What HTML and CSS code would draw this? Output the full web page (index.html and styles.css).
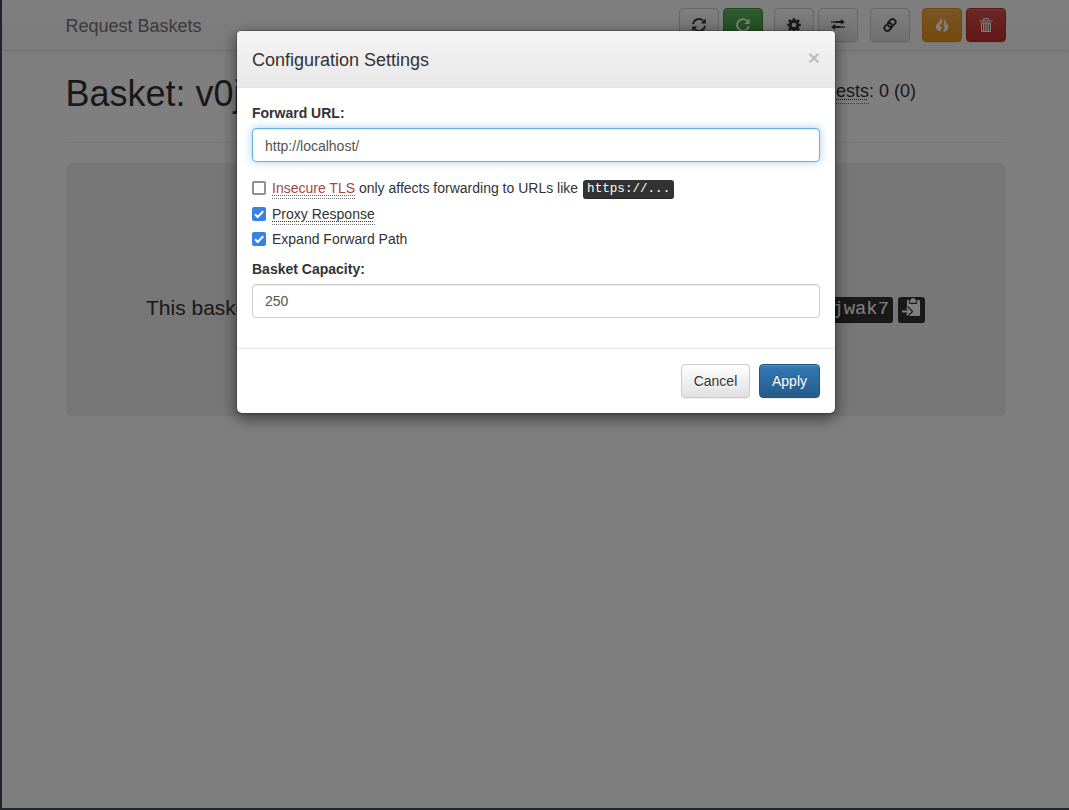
FILE: index.html
```html
<!DOCTYPE html>
<html lang="en">
<head>
<meta charset="utf-8">
<title>Request Baskets</title>
<link rel="stylesheet" href="styles.css">
</head>
<body>
<div class="page">
  <nav class="navbar">
    <div class="container navbar-inner">
      <a class="brand">Request Baskets</a>
      <div class="toolbar">
        <div class="btn-group">
          <button class="btn btn-default btn-icon" aria-label="Refresh"><svg class="icon" viewBox="0 0 14 14"><g fill="none" stroke="currentColor" stroke-width="1.7"><path d="M1 6.2A6 6 0 0 1 11.2 2.8"/><path d="M13 7.8A6 6 0 0 1 2.8 11.2"/></g><path d="M13.8 0.4V5.4H8.8ZM.2 13.6V8.6H5.2Z" fill="currentColor"/></svg></button>
          <button class="btn btn-success btn-icon" aria-label="Auto refresh"><svg class="icon" viewBox="0 0 14 14"><path d="M11.2 2.8A5.9 5.9 0 1 0 12.8 8.3" fill="none" stroke="currentColor" stroke-width="1.9"/><path d="M13.6 .6V5.9H8.3Z" fill="currentColor"/></svg></button>
        </div>
        <div class="btn-group">
          <button class="btn btn-default btn-icon" aria-label="Settings"><svg class="icon" viewBox="0 0 14 14"><circle cx="7" cy="7" r="3.8" fill="none" stroke="currentColor" stroke-width="2.9"/><path d="M7 .2V3M7 11V13.8M.2 7H3M11 7H13.8M2 2L4.1 4.1M9.9 9.9L12 12M12 2L9.9 4.1M4.1 9.9L2 12" stroke="currentColor" stroke-width="2.6"/></svg></button>
          <button class="btn btn-default btn-icon" aria-label="Responses"><svg class="icon" viewBox="0 0 14 14"><path d="M.3 2.9H1.2V4.9H.3ZM1.9 2.9H3.5V4.9H1.9ZM4.2 2.9H9.8V1L14 3.9L9.8 6.8V4.9H4.2ZM13.7 8H12.8V10H13.7ZM12.1 8H10.5V10H12.1ZM9.8 8H4.2V6.1L0 9L4.2 11.9V10H9.8Z" fill="currentColor"/></svg></button>
        </div>
        <div class="btn-group">
          <button class="btn btn-default btn-icon" aria-label="Copy link"><svg class="icon" viewBox="0 0 14 14"><g fill="none" stroke="currentColor" stroke-width="1.9" stroke-linecap="round"><path d="M8.3 9C6.6 9.2 4.2 7.2 4.7 5.4C4.9 4.6 6.6 2.9 7.8 1.8C9 .7 10.5.8 11.6 1.9C12.9 3.1 13 4.5 12 5.7L11 6.8"/><path d="M5.7 5C7.4 4.8 9.8 6.8 9.3 8.6C9.1 9.4 7.4 11.1 6.2 12.2C5 13.3 3.5 13.2 2.4 12.1C1.1 10.9 1 9.5 2 8.3L3 7.2"/></g></svg></button>
        </div>
        <div class="btn-group">
          <button class="btn btn-warning btn-icon" aria-label="Delete requests"><svg class="icon" viewBox="0 0 14 14"><path d="M5 13.8C2.3 12.8.8 10.9.9 8.6C1 6.2 2.6 5 4 3.7C5.4 2.4 6 1.3 5.8 0C7.5 1.2 7.8 2.9 7 4.5C6.1 6.2 4.5 7.1 4.9 8.5C5.2 9.7 6.5 9.5 6.5 8.1C7.6 9.3 7 10.6 6 11.5C5.2 12.2 4.8 12.9 5 13.8ZM8.6 14C8.2 12.4 9.4 11.6 9.5 10C9.6 8.7 8.9 7.8 8.4 6.8C9.3 5.2 9.7 3.3 8.8 1.2C11 2.4 11.5 4.2 11.1 6.4C11 7.6 12.2 7 12.1 5.3C13.2 6.5 13.5 7.9 13.2 9.4C12.8 11.8 11 13.6 8.6 14Z" fill="currentColor"/></svg></button>
          <button class="btn btn-danger btn-icon" aria-label="Delete basket"><svg class="icon" viewBox="0 0 14 14"><path d="M4.7 2.5V.5H9.3V2.5M.5 2.9H13.5M2.5 5V13.5H11.5V5M2 4.9H12M4.5 5V13M6.2 5V13M7.9 5V13M9.6 5V13" fill="none" stroke="currentColor" stroke-width="1"/></svg></button>
        </div>
      </div>
    </div>
  </nav>
  <main class="container">
    <header class="page-header">
      <h1 class="basket-title">Basket: v0jwak7</h1>
      <h4 class="request-count"><abbr class="hint" title="Requests in the basket">Requests</abbr>: 0 (0)</h4>
    </header>
    <section class="jumbotron">
      <span>This basket is empty</span>
      <span class="basket-link"><kbd class="kbd">/v0jwak7</kbd><kbd class="kbd kbd-copy"><svg class="copy-icon" viewBox="0 0 18 18"><path d="M5 2H7V4.8Q7 6 8.2 6H14Q15.2 6 15.2 4.8V2H17.2Q18 2 18 2.8V17.2Q18 18 17.2 18H5V15L7 13L7 8.8V10.5H5Z" fill="currentColor"/><path d="M8 4.8V2.2Q8 1.6 9 1.5Q9.4 0 11.1 0Q12.8 0 13.2 1.5Q14.2 1.6 14.2 2.2V4.8Z" fill="currentColor"/><path d="M0 13.5H8M4.8 9.7L8.6 13.5L4.8 17.3" fill="none" stroke="#333" stroke-width="4"/><path d="M0 13.5H8M4.8 10L8.3 13.5L4.8 17" fill="none" stroke="currentColor" stroke-width="1.9"/></svg></kbd></span>
    </section>
  </main>
</div>
<div class="backdrop">
  <div class="modal" role="dialog">
    <div class="modal-header">
      <h4 class="modal-title">Configuration Settings</h4>
      <button class="close" aria-label="Close">×</button>
    </div>
    <div class="modal-body">
      <label class="field-label">Forward URL:</label>
      <input class="field field-focus" type="text" value="http://localhost/">
      <div class="options">
        <div class="option"><span class="check"></span><span><abbr class="hint danger">Insecure TLS</abbr> only affects forwarding to URLs like</span><kbd class="kbd kbd-small">https://...</kbd></div>
        <div class="option"><span class="check checked"><svg class="tick" viewBox="0 0 14 14"><path d="M3 7.3L5.7 10L11.2 4.2" fill="none" stroke="#fff" stroke-width="2"/></svg></span><abbr class="hint">Proxy Response</abbr></div>
        <div class="option"><span class="check checked"><svg class="tick" viewBox="0 0 14 14"><path d="M3 7.3L5.7 10L11.2 4.2" fill="none" stroke="#fff" stroke-width="2"/></svg></span><span>Expand Forward Path</span></div>
      </div>
      <label class="field-label">Basket Capacity:</label>
      <input class="field" type="text" value="250">
    </div>
    <div class="modal-footer">
      <button class="btn btn-default btn-cancel">Cancel</button>
      <button class="btn btn-primary">Apply</button>
    </div>
  </div>
</div>
</body>
</html>
```
FILE: styles.css
```css
* { box-sizing: border-box; }
body {
  margin: 0;
  height: 810px;
  overflow: hidden;
  background: #24242f;
  color: #333;
  font: 14px/20px "Liberation Sans", Arial, sans-serif;
}
.page {
  width: 1067px;
  height: 808px;
  margin-left: 2px;
  background: #fff;
}
.container {
  width: 940px;
  margin: 0 auto 0 64px;
}
.navbar {
  height: 51px;
  border-bottom: 1px solid #e7e7e7;
  background: linear-gradient(#fff, #f8f8f8);
  box-shadow: 0 1px 5px rgba(0, 0, 0, .075);
}
.navbar-inner {
  display: flex;
  justify-content: space-between;
  padding-top: 8px;
}
.brand {
  margin-left: -.5px;
  padding-top: 8px;
  color: #777;
  font-size: 18px;
}
.toolbar { display: flex; gap: 12px; }
.btn-group { display: flex; gap: 4px; }
.btn-group:first-child { margin-right: -1px; }
.btn {
  height: 34px;
  padding: 0 12px;
  border: 1px solid #ccc;
  border-radius: 4px;
  font: inherit;
  box-shadow: inset 0 1px 0 rgba(255, 255, 255, .15), 0 1px 1px rgba(0, 0, 0, .075);
}
.btn-icon { display: flex; align-items: center; width: 40px; }
.icon { flex: none; width: 14px; height: 14px; }
.btn-default {
  color: #333;
  background: linear-gradient(#fff, #e0e0e0);
  text-shadow: 0 1px 0 #fff;
}
.btn-success, .btn-warning, .btn-danger, .btn-primary {
  color: #fff;
  text-shadow: 0 -1px 0 rgba(0, 0, 0, .2);
}
.btn-success { background: linear-gradient(#5cb85c, #419641); border-color: #3e8f3e; }
.btn-warning { background: linear-gradient(#f0ad4e, #eb9316); border-color: #e38d13; }
.btn-danger { background: linear-gradient(#d9534f, #c12e2a); border-color: #b92c28; }
.btn-primary { background: linear-gradient(#337ab7, #265a88); border-color: #245580; }
.btn-cancel { width: 69px; padding: 0; }
.page-header {
  display: flex;
  justify-content: space-between;
  height: 92px;
  padding: 23px 90px 0 0;
  border-bottom: 1px solid #eee;
}
.basket-title { margin: 0 0 0 -.5px; font-size: 36px; line-height: 40px; }
.request-count { margin: 7px 0 0; font-size: 18px; line-height: 20px; }
.basket-title, .request-count, .modal-title { font-weight: 400; }
.hint {
  display: inline-block;
  border-bottom: 1px dotted #777;
  text-decoration: underline dotted 1px;
  text-underline-offset: 2px;
}
.request-count .hint { height: 23px; }
.jumbotron {
  display: flex;
  justify-content: space-between;
  height: 253px;
  margin-top: 20px;
  padding: 130px 81px 0 80px;
  border-radius: 6px;
  background: #eee;
  font-size: 21px;
  line-height: 30px;
}
.basket-link { display: flex; gap: 5px; padding-top: 4px; }
.kbd {
  padding: 2px 4px;
  border-radius: 3px;
  color: #fff;
  background: #333;
  font-family: "Liberation Mono", monospace;
  font-size: 18.9px;
  line-height: 21px;
  box-shadow: inset 0 -1px 0 rgba(0, 0, 0, .25);
}
.basket-link .kbd { height: 26px; }
.kbd-copy { width: 27px; }
.copy-icon { display: block; width: 18px; height: 18px; margin-top: -1px; }
.backdrop {
  position: absolute;
  left: 2px;
  top: 0;
  width: 1067px;
  height: 808px;
  padding-top: 30px;
  background: rgba(0, 0, 0, .5);
}
.modal {
  width: 600px;
  height: 384px;
  margin-left: 234px;
  border: 1px solid rgba(0, 0, 0, .2);
  border-radius: 6px;
  background: #fff;
  background-clip: padding-box;
  box-shadow: 0 5px 15px rgba(0, 0, 0, .5);
}
.modal-header {
  display: flex;
  justify-content: space-between;
  height: 57px;
  padding: 16px 15px 0;
  border-bottom: 1px solid #e5e5e5;
  border-radius: 4px 4px 0 0;
  background: linear-gradient(#f5f5f5, #e8e8e8);
}
.modal-title { margin: 0; font-size: 18px; line-height: 26px; }
.close {
  height: 21px;
  padding: 0;
  border: 0;
  background: none;
  color: #000;
  opacity: .2;
  font: bold 21px/21px "Liberation Sans", Arial, sans-serif;
  text-shadow: 0 1px 0 #fff;
}
.modal-body { height: 260px; padding: 15px; }
.field-label { display: block; margin-bottom: 5px; font-weight: 700; }
.field {
  display: block;
  width: 100%;
  height: 34px;
  padding: 6px 12px;
  border: 1px solid #ccc;
  border-radius: 4px;
  color: #555;
  font: inherit;
  box-shadow: inset 0 1px 1px rgba(0, 0, 0, .075);
}
.field-focus {
  padding: 7px 12px 5px;
  border-color: #66afe9;
  box-shadow: inset 0 1px 1px rgba(0, 0, 0, .075), 0 0 8px rgba(102, 175, 233, .6);
}
.options { height: 97px; padding-top: 16px; }
.option { display: flex; gap: 6px; height: 25px; }
.option:first-child { height: 26px; }
.option .hint { height: 21px; }
.danger { color: #a94442; }
.check {
  flex: none;
  width: 14px;
  height: 14px;
  margin-top: 3px;
  border: 2px solid #8f8f9d;
  border-radius: 2px;
}
.checked { border: 0; background: #3584e4; }
.tick { display: block; }
.kbd-small {
  width: 91px;
  height: 19px;
  margin: 2px 0 0 -1px;
  padding: 0 4px;
  font-size: 12.6px;
  line-height: 19px;
}
.modal-footer {
  display: flex;
  justify-content: flex-end;
  gap: 9px;
  padding: 15px;
  border-top: 1px solid #e5e5e5;
}
```
